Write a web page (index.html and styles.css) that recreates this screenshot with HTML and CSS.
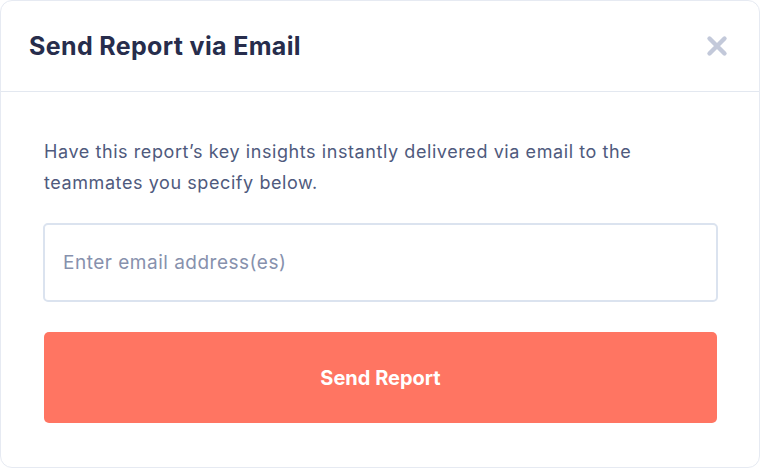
FILE: index.html
```html
<!DOCTYPE html>
<html>
<head>
<meta charset="utf-8">
<link rel="stylesheet" href="styles.css">
</head>
<body>
<div class="modal">
  <div class="modal-header">
    <h1 class="title">Send Report via Email</h1>
    <button class="close" aria-label="Close">
      <svg width="22" height="22" viewBox="0 0 22 22"><path d="M3.5 3.5 L18.5 18.5 M18.5 3.5 L3.5 18.5" stroke="#c3c9da" stroke-width="4.4" stroke-linecap="round"/></svg>
    </button>
  </div>
  <div class="modal-body">
    <p class="desc">Have this report’s key insights instantly delivered via email to the teammates you specify below.</p>
    <input class="email" type="text" placeholder="Enter email address(es)">
    <button class="send">Send Report</button>
  </div>
</div>
</body>
</html>
```
FILE: styles.css
```css
html, body {
  margin: 0;
  padding: 0;
  background: #ffffff;
}
body {
  font-family: Inter, "Noto Sans", sans-serif;
}
.modal {
  box-sizing: border-box;
  width: 760px;
  height: 468px;
  border: 1px solid #e6eaf2;
  border-radius: 12px;
  background: #fff;
  overflow: hidden;
}
.modal-header {
  height: 90px;
  border-bottom: 1px solid #e3e8f0;
  display: flex;
  align-items: center;
  justify-content: space-between;
  padding: 0 31px 0 28px;
}
.title {
  margin: 0;
  font-size: 25px;
  font-weight: 700;
  color: #272d4c;
  letter-spacing: 0.35px;
}
.close {
  border: 0;
  background: none;
  padding: 0;
  width: 22px;
  height: 22px;
  display: flex;
}
.modal-body {
  padding: 44px 41px 0 42px;
  display: flex;
  flex-direction: column;
}
.desc {
  margin: 0 0 25px 1px;
  max-width: 630px;
  font-size: 18px;
  line-height: 31px;
  color: #4f5a7d;
  letter-spacing: 0.58px;
}
.email {
  box-sizing: border-box;
  height: 79px;
  border: 2px solid #dbe3ef;
  border-radius: 5px;
  padding: 0 18px;
  font-family: inherit;
  font-size: 19px;
  letter-spacing: 0.5px;
  color: #4d587a;
  outline: none;
}
.email::placeholder {
  color: #8791ad;
}
.send {
  margin: 30px 1px 0;
  height: 91px;
  border: 0;
  border-radius: 5px;
  background: #ff7562;
  color: #fff;
  font-family: inherit;
  font-size: 20px;
  font-weight: 700;
  letter-spacing: 0;
}
```
